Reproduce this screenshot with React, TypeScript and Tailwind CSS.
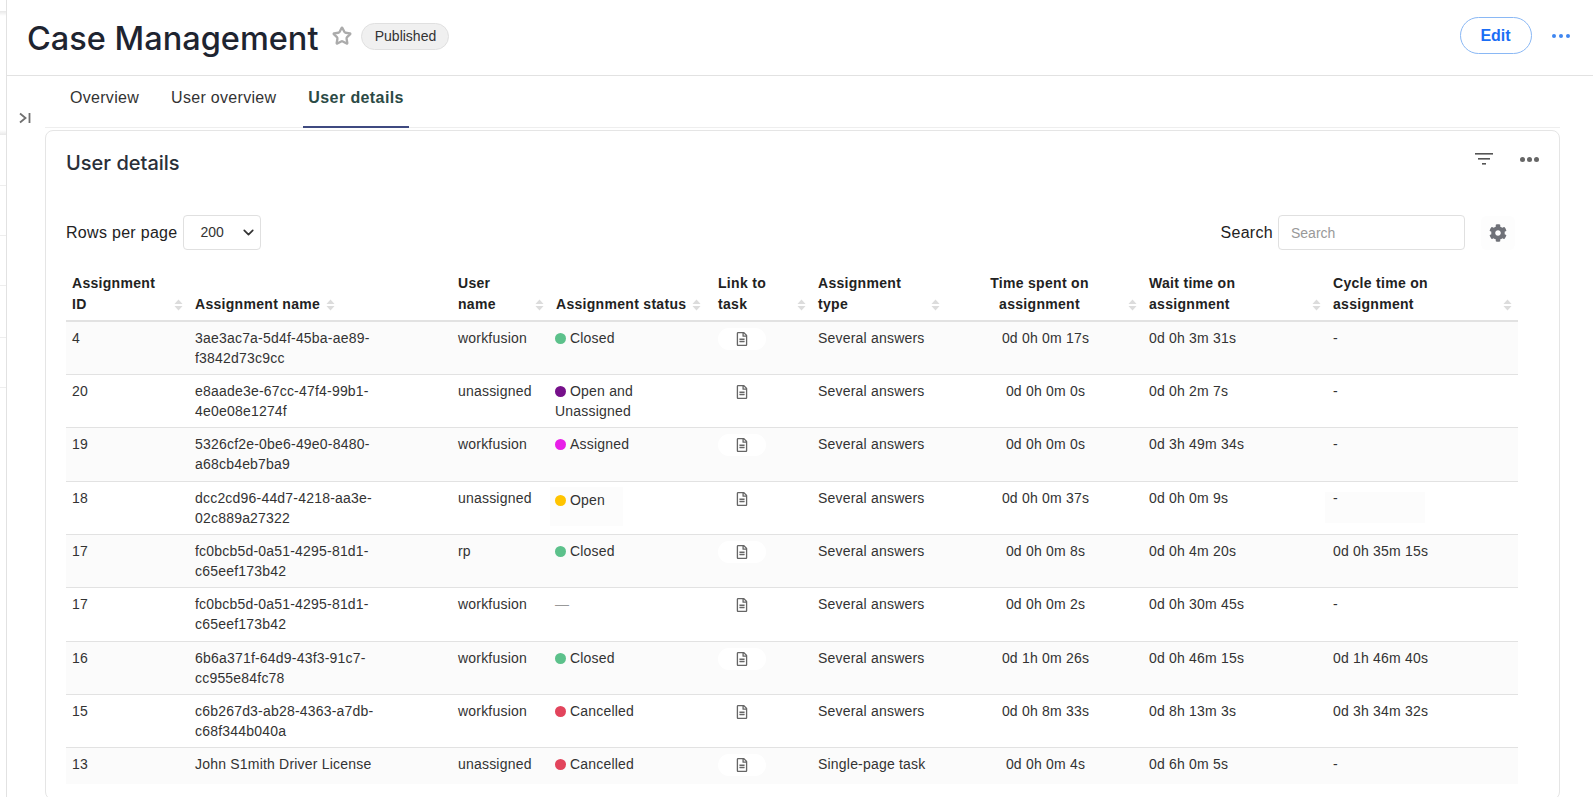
import { ChevronDown, Star } from 'lucide-react';
import { FaCog, FaRegFileAlt } from 'react-icons/fa';

const bodyFont = "font-['Liberation_Sans',Arial,sans-serif]";
const titleFont = "font-['Inter',sans-serif]";

type Row = {
  id: string;
  name: string[];
  user: string;
  status: string;
  dot: string;
  link: boolean;
  type: string;
  spent: string;
  wait: string;
  cycle: string;
  height: string;
};

const rows: Row[] = [
  { id: '4', name: ['3ae3ac7a-5d4f-45ba-ae89-', 'f3842d73c9cc'], user: 'workfusion', status: 'Closed', dot: 'bg-[#5cc18b]', link: true, type: 'Several answers', spent: '0d 0h 0m 17s', wait: '0d 0h 3m 31s', cycle: '-', height: 'h-[53px]' },
  { id: '20', name: ['e8aade3e-67cc-47f4-99b1-', '4e0e08e1274f'], user: 'unassigned', status: 'Open and Unassigned', dot: 'bg-[#76108a]', link: false, type: 'Several answers', spent: '0d 0h 0m 0s', wait: '0d 0h 2m 7s', cycle: '-', height: 'h-[53px]' },
  { id: '19', name: ['5326cf2e-0be6-49e0-8480-', 'a68cb4eb7ba9'], user: 'workfusion', status: 'Assigned', dot: 'bg-[#e81fe8]', link: true, type: 'Several answers', spent: '0d 0h 0m 0s', wait: '0d 3h 49m 34s', cycle: '-', height: 'h-[54px]' },
  { id: '18', name: ['dcc2cd96-44d7-4218-aa3e-', '02c889a27322'], user: 'unassigned', status: 'Open', dot: 'bg-[#ffc400]', link: false, type: 'Several answers', spent: '0d 0h 0m 37s', wait: '0d 0h 0m 9s', cycle: '-', height: 'h-[53px]' },
  { id: '17', name: ['fc0bcb5d-0a51-4295-81d1-', 'c65eef173b42'], user: 'rp', status: 'Closed', dot: 'bg-[#5cc18b]', link: true, type: 'Several answers', spent: '0d 0h 0m 8s', wait: '0d 0h 4m 20s', cycle: '0d 0h 35m 15s', height: 'h-[53px]' },
  { id: '17', name: ['fc0bcb5d-0a51-4295-81d1-', 'c65eef173b42'], user: 'workfusion', status: '', dot: '', link: false, type: 'Several answers', spent: '0d 0h 0m 2s', wait: '0d 0h 30m 45s', cycle: '-', height: 'h-[54px]' },
  { id: '16', name: ['6b6a371f-64d9-43f3-91c7-', 'cc955e84fc78'], user: 'workfusion', status: 'Closed', dot: 'bg-[#5cc18b]', link: true, type: 'Several answers', spent: '0d 1h 0m 26s', wait: '0d 0h 46m 15s', cycle: '0d 1h 46m 40s', height: 'h-[53px]' },
  { id: '15', name: ['c6b267d3-ab28-4363-a7db-', 'c68f344b040a'], user: 'workfusion', status: 'Cancelled', dot: 'bg-[#e2445c]', link: false, type: 'Several answers', spent: '0d 0h 8m 33s', wait: '0d 8h 13m 3s', cycle: '0d 3h 34m 32s', height: 'h-[53px]' },
  { id: '13', name: ['John S1mith Driver License'], user: 'unassigned', status: 'Cancelled', dot: 'bg-[#e2445c]', link: true, type: 'Single-page task', spent: '0d 0h 0m 4s', wait: '0d 6h 0m 5s', cycle: '-', height: 'h-[37px]' },
];

function SortIcon() {
  return (
    <svg width="9" height="12" viewBox="0 0 9 12" className="shrink-0 mb-[4px]">
      <path d="M4.5 0.5L8.5 5H0.5Z" fill="#dcdcdc" />
      <path d="M4.5 11.5L0.5 7H8.5Z" fill="#dcdcdc" />
    </svg>
  );
}

function HeaderCell({ lines, center, tight }: { lines: string[]; center?: boolean; tight?: boolean }) {
  return (
    <th className="px-[6px] pb-[5px] pt-0 align-bottom text-left font-bold">
      <div className={`flex items-end ${tight ? 'gap-[6px]' : 'justify-between'}`}>
        <div className={center ? 'flex-1 text-center pr-[1px]' : ''}>
          {lines.map((l) => (
            <div key={l}>{l}</div>
          ))}
        </div>
        <SortIcon />
      </div>
    </th>
  );
}

function Status({ row }: { row: Row }) {
  if (!row.status) return <span className="text-[#999]">—</span>;
  return (
    <span>
      <span className={`mr-[4px] inline-block h-[11px] w-[11px] rounded-full align-[-1px] ${row.dot}`} />
      {row.status}
    </span>
  );
}

export default function App() {
  return (
    <div className={`flex h-[797px] w-[1593px] overflow-hidden bg-white text-[#333] ${bodyFont}`}>
      {/* left rail */}
      <div className="w-[7px] shrink-0 border-r border-[#e2e2e2]">
        <div className="mt-[11px] h-[5px] bg-gradient-to-b from-[#e8e8e8] to-white" />
        <div className="mt-[114px] h-[5px] bg-gradient-to-t from-[#e8e8e8] to-white" />
        <div className="mt-[50px] h-[50px] border-t border-[#eeeeee]" />
        <div className="h-[50px] border-t border-[#eeeeee]" />
        <div className="h-[52px] border-t border-[#eeeeee]" />
        <div className="h-[50px] border-t border-[#eeeeee]" />
        <div className="h-[50px] border-t border-[#eeeeee]" />
      </div>

      <div className="flex min-w-0 flex-1 flex-col">
        <header className="flex h-[76px] shrink-0 items-center border-b border-[#e2e2e2] pl-[20px] pr-[23px]">
          <h1 className={`mt-[3px] text-[32.5px] font-medium leading-none text-[#1e2430] ${titleFont}`}>Case Management</h1>
          <Star size={20} strokeWidth={2.8} className="ml-[14px] mb-[3px] text-[#ababab]" />
          <span className="ml-[9px] mb-[2px] flex h-[27px] w-[88px] items-center justify-center rounded-full border border-[#e0e0e0] bg-[#f0f0f0] text-[14px]">
            Published
          </span>
          <button className="ml-auto mb-[4px] h-[37px] w-[72px] rounded-full border border-[#8ab8f5] text-[16px] font-bold text-[#1a6ef5]">
            Edit
          </button>
          <div className="ml-[20px] mb-[3px] flex gap-[2.5px]">
            <span className="h-[4.5px] w-[4.5px] rounded-full bg-[#3f86f0]" />
            <span className="h-[4.5px] w-[4.5px] rounded-full bg-[#3f86f0]" />
            <span className="h-[4.5px] w-[4.5px] rounded-full bg-[#3f86f0]" />
          </div>
        </header>

        <div className="flex min-h-0 flex-1">
          <div className="w-[38px] shrink-0 pl-[12px] pt-[36px]">
            <svg width="12" height="12" viewBox="0 0 12 12" fill="none" stroke="#707070" strokeWidth="1.8">
              <path d="M1 1.5L6.5 6L1 10.5" />
              <path d="M10.5 1V11" />
            </svg>
          </div>

          <main className="mr-[33px] flex min-w-0 flex-1 flex-col">
            <nav className="flex h-[52px] shrink-0 gap-[22px] border-b border-[#eeeeee] pl-[20px] text-[16px] tracking-[0.3px]">
              <a className="flex h-full items-center px-[5px] pb-[8px]">Overview</a>
              <a className="flex h-full items-center px-[5px] pb-[8px]">User overview</a>
              <a className="flex h-[52px] items-center border-b-2 border-[#3f4a80] px-[5px] pb-[6px] font-bold tracking-[0.4px] text-[#2b4a45]">
                User details
              </a>
            </nav>

            <section className="-mb-[3px] mt-[2px] flex-1 rounded-lg border border-[#e5e5e5] pl-[20px] pr-[41px]">
              <div className="-mr-[21px] mt-[20px] flex h-[24px] items-center justify-between">
                <h2 className={`text-[20px] font-medium text-[#2a2f38] ${titleFont}`}>User details</h2>
                <div className="flex items-center gap-[27px]">
                  <svg width="18" height="13" viewBox="0 0 18 13" className="mb-[8px]" fill="#555">
                    <rect x="0" y="0" width="18" height="1.6" />
                    <rect x="3" y="5" width="12" height="1.6" />
                    <rect x="7" y="10" width="4" height="1.6" />
                  </svg>
                  <div className="mb-[8px] flex gap-[2px]">
                    <span className="h-[5px] w-[5px] rounded-full bg-[#666]" />
                    <span className="h-[5px] w-[5px] rounded-full bg-[#666]" />
                    <span className="h-[5px] w-[5px] rounded-full bg-[#666]" />
                  </div>
                </div>
              </div>

              <div className="mt-[40px] flex h-[35px] items-center text-[16px]">
                <span className="tracking-[0.3px] text-[#222]">Rows per page</span>
                <div className="ml-[5px] flex h-[35px] w-[78px] items-center justify-between rounded border border-[#e0e0e0] pl-[17px] pr-[3px] text-[14px]">
                  200
                  <ChevronDown size={17} strokeWidth={2.4} className="text-[#333]" />
                </div>
                <span className="ml-auto tracking-[0.3px] text-[#222]">Search</span>
                <input
                  placeholder="Search"
                  className="ml-[5px] h-[35px] w-[187px] rounded border border-[#e0e0e0] px-[12px] text-[14px] outline-none placeholder:text-[#999]"
                />
                <div className="ml-[16px] mr-[3px] flex h-[34px] w-[34px] items-center justify-center rounded-md bg-[#fdfdfd]">
                  <FaCog size={18} className="text-[#6f7178]" />
                </div>
              </div>

              <table className="mt-[23px] w-full table-fixed border-collapse text-[14px] leading-[20px]">
                <colgroup>
                  <col className="w-[123px]" />
                  <col className="w-[263px]" />
                  <col className="w-[98px]" />
                  <col className="w-[162px]" />
                  <col className="w-[100px]" />
                  <col className="w-[134px]" />
                  <col className="w-[197px]" />
                  <col className="w-[184px]" />
                  <col className="w-[191px]" />
                </colgroup>
                <thead>
                  <tr className="border-b-2 border-[#e2e2e2] leading-[21px] tracking-[0.3px] text-[#222]">
                    <HeaderCell lines={['Assignment', 'ID']} />
                    <HeaderCell lines={['Assignment name']} tight />
                    <HeaderCell lines={['User', 'name']} />
                    <HeaderCell lines={['Assignment status']} tight />
                    <HeaderCell lines={['Link to', 'task']} />
                    <HeaderCell lines={['Assignment', 'type']} />
                    <HeaderCell lines={['Time spent on', 'assignment']} center />
                    <HeaderCell lines={['Wait time on', 'assignment']} />
                    <HeaderCell lines={['Cycle time on', 'assignment']} />
                  </tr>
                </thead>
                <tbody className="tracking-[0.2px]">
                  {rows.map((row, i) => (
                    <tr key={`${row.id}-${i}`} className={`${row.height} border-b border-[#e2e2e2] last:border-b-0 ${i % 2 === 0 ? 'bg-[#fbfbfb]' : 'bg-white'}`}>
                      <td className="px-[6px] pt-[6px] align-top">{row.id}</td>
                      <td className="px-[6px] pt-[6px] align-top">
                        {row.name.map((l) => (
                          <div key={l}>{l}</div>
                        ))}
                      </td>
                      <td className="px-[6px] pt-[6px] align-top">{row.user}</td>
                      <td className="px-[6px] pt-[6px] align-top">
                        {row.status === 'Open' ? (
                          <div className="-mx-[6px] -mt-[1px] h-[39px] w-[73px] bg-[#fcfcfc] pl-[5px] pt-[3px]">
                            <Status row={row} />
                          </div>
                        ) : (
                          <div className="-ml-[1px]">
                            <Status row={row} />
                          </div>
                        )}
                      </td>
                      <td className="px-[6px] pt-[6px] align-top">
                        <div className="flex h-[22px] w-[48px] items-center justify-center rounded-full bg-white">
                          <FaRegFileAlt size={14} className="text-[#666]" />
                        </div>
                      </td>
                      <td className="px-[6px] pt-[6px] align-top">{row.type}</td>
                      <td className="pl-[8px] pr-[6px] pt-[6px] text-center align-top">{row.spent}</td>
                      <td className="px-[6px] pt-[6px] align-top">{row.wait}</td>
                      <td className="px-[6px] pt-[6px] align-top">
                        {row.status === 'Open' ? (
                          <div className="-ml-[8px] mt-[4px] h-[31px] w-[100px] bg-[#fcfcfc] pl-[8px] leading-[12px]">{row.cycle}</div>
                        ) : (
                          row.cycle
                        )}
                      </td>
                    </tr>
                  ))}
                </tbody>
              </table>
            </section>
          </main>
        </div>
      </div>
    </div>
  );
}
